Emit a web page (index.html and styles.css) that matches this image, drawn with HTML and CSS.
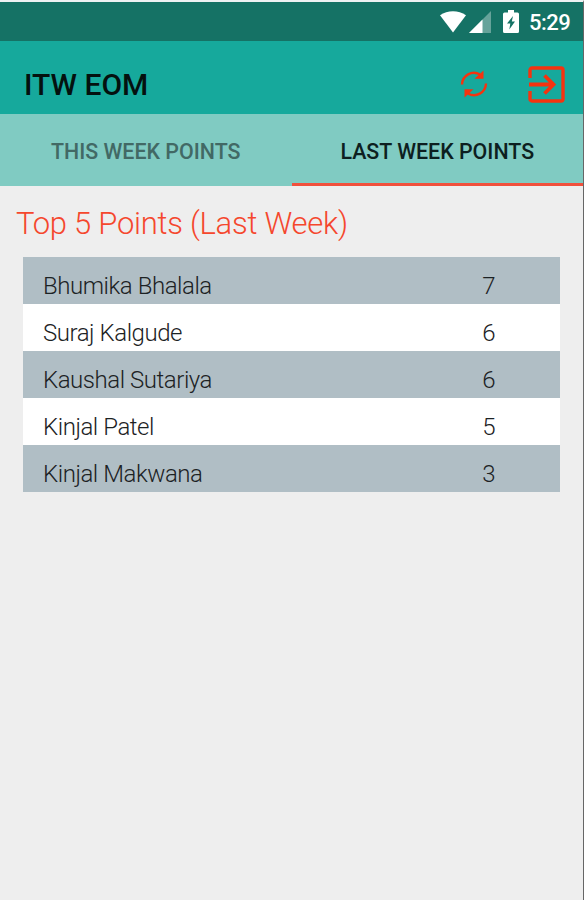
FILE: index.html
```
<!DOCTYPE html>
<html lang="en">
<head>
    <meta charset="UTF-8">
    <meta name="viewport" content="width=device-width, initial-scale=1.0">
    <title>ITW EOM</title>
    <link rel="stylesheet" href="styles.css">
</head>
<body>

    <div class="screen">
        <div class="status-bar">
            <svg class="wifi-icon" width="26" height="22" viewBox="0 0 26 22">
                <path d="M0 4.3C7.5-1.2 18.5-1.2 26 4.3L13 21.5z" fill="#fff"/>
            </svg>
            <svg class="signal-icon" width="22" height="22" viewBox="0 0 22 22">
                <path d="M22 0v22H0z" fill="#fff" fill-opacity=".35"/>
                <path d="M13.5 8.5V22H0z" fill="#fff"/>
            </svg>
            <svg class="battery-icon" width="16" height="23" viewBox="0 0 16 23">
                <path d="M5 0h6v2.5h3.5a1.5 1.5 0 0 1 1.5 1.5V21.5a1.5 1.5 0 0 1-1.5 1.5H1.5A1.5 1.5 0 0 1 0 21.5V4a1.5 1.5 0 0 1 1.5-1.5H5z" fill="#fff"/>
                <path d="M10 6L4 13.5h3.3L6.3 19.5L12 11.5H8.8z" fill="#157265"/>
            </svg>
            <span class="clock">5:29</span>
        </div>

        <header class="app-bar">
            <h1>ITW EOM</h1>
            <div class="actions">
                <svg class="refresh-icon" width="28" height="28" viewBox="0 0 28 28">
                    <g fill="none" stroke="#f5330f" stroke-width="2.4">
                        <path d="M2 14.500A12 12 0 0 1 20 4.500"/>
                        <path d="M26 13.500A12 12 0 0 1 8 23.500"/>
                    </g>
                    <path d="M23.500 0.500V8.800H14.500z" fill="#f5330f"/>
                    <path d="M4.500 27.500V19.200H13.500z" fill="#f5330f"/>
                </svg>
                <svg class="exit-icon" width="37" height="37" viewBox="0 0 37 37">
                    <g fill="none" stroke="#f5330f">
                        <path d="M2 12V4a2 2 0 0 1 2-2H33a2 2 0 0 1 2 2V33a2 2 0 0 1-2 2H4a2 2 0 0 1-2-2V25" stroke-width="3.4"/>
                        <path d="M1 18.5H25M16.5 9.5L25.5 18.5L16.5 27.5" stroke-width="3.8"/>
                    </g>
                </svg>
            </div>
        </header>

        <nav class="tabs">
            <div class="tab">THIS WEEK POINTS</div>
            <div class="tab active">LAST WEEK POINTS</div>
        </nav>

        <main class="content">
            <h2>Top 5 Points (Last Week)</h2>
            <div class="points-list">
                <div class="row"><span>Bhumika Bhalala</span><span class="points">7</span></div>
                <div class="row"><span>Suraj Kalgude</span><span class="points">6</span></div>
                <div class="row"><span>Kaushal Sutariya</span><span class="points">6</span></div>
                <div class="row"><span>Kinjal Patel</span><span class="points">5</span></div>
                <div class="row"><span>Kinjal Makwana</span><span class="points">3</span></div>
            </div>
        </main>
    </div>

</body>
</html>
```
FILE: styles.css
```
* {
    box-sizing: border-box;
}

body {
    margin: 0;
    background-color: #eeeeee;
    font-family: Roboto, sans-serif;
}

.screen {
    height: 900px;
    border-top: 2px solid #edf2f3;
    border-right: 1px solid #666;
    overflow: hidden;
}

.status-bar {
    display: flex;
    height: 39px;
    padding: 0 12px 0 0;
    justify-content: flex-end;
    align-items: center;
    background-color: #157265;
    color: #fff;
}

.signal-icon {
    margin-left: 3px;
}

.battery-icon {
    margin-left: 12px;
}

.clock {
    width: 42px;
    margin-left: 10px;
    padding-top: 3px;
    font-size: 22px;
    font-weight: 500;
    line-height: 26px;
    letter-spacing: -0.5px;
    white-space: nowrap;
}

.app-bar {
    display: flex;
    height: 73px;
    padding: 13px 18px 0 24px;
    justify-content: space-between;
    align-items: center;
    background-color: #16a99c;
}

.app-bar h1 {
    margin: 2px 0 0;
    color: #04110f;
    font-size: 30px;
    font-weight: 500;
    line-height: 34px;
}

.actions {
    display: flex;
    align-items: center;
    gap: 40px;
}

.tabs {
    display: flex;
    height: 72px;
    background-color: #80cbc2;
}

.tab {
    flex: 1;
    padding-top: 4px;
    border-bottom: 3px solid transparent;
    color: #426965;
    font-size: 21.4px;
    font-weight: 500;
    line-height: 68px;
    text-align: center;
}

.tab.active {
    border-bottom-color: #f0503c;
    color: #0d1f20;
}

.content {
    padding: 18px 23px 0;
}

.content h2 {
    margin: 0 0 14px -7px;
    color: #f5472d;
    font-size: 31px;
    font-weight: 300;
    line-height: 39px;
    letter-spacing: -0.27px;
    white-space: nowrap;
}

.row {
    display: flex;
    height: 47.1px;
    padding: 9px 65px 0 20px;
    justify-content: space-between;
    background-color: #fff;
    color: #1c2224;
    font-size: 24px;
    font-weight: 300;
    line-height: 40px;
    letter-spacing: -0.45px;
}

.row:nth-child(odd) {
    background-color: #b0bec5;
}
```
